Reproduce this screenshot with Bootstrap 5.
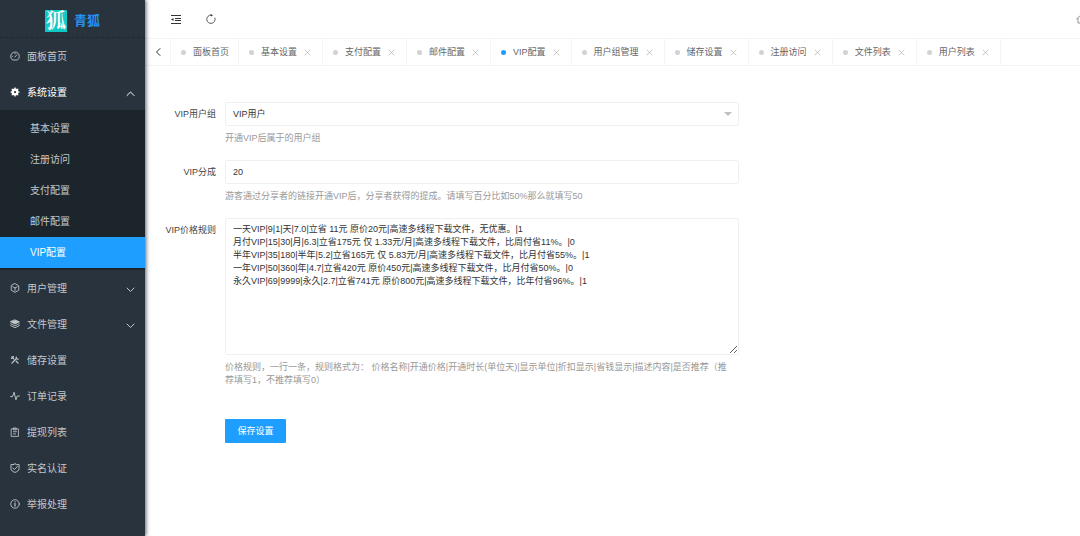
<!DOCTYPE html>
<html lang="zh-CN">
<head>
<meta charset="utf-8">
<meta name="viewport" content="width=device-width, initial-scale=1">
<title>青狐 - VIP配置</title>
<link href="https://cdn.jsdelivr.net/npm/bootstrap@5.3.0/dist/css/bootstrap.min.css" rel="stylesheet">
<style>
  :root { --accent: #1e9fff; --line: #f4f4f4; }
  body { font: 9px/13px "Liberation Sans", "Noto Sans CJK SC", sans-serif; color: #444; background: #fff; }
  a { color: inherit; text-decoration: none; }
  svg { fill: none; stroke: currentColor; stroke-linecap: round; stroke-linejoin: round; flex: none; }

  /* sidebar */
  .side { width: 145px; background: #28333e; color: #c4c8cb; font-size: 10px; box-shadow: 1px 0 4px rgba(40,51,62,.8); z-index: 2; }
  .brand { height: 38px; padding-top: 4px; gap: 7px; border-bottom: 1px dashed #1f2830; }
  .brand-mark { width: 22px; height: 22px; background: #10c8c6; color: #fff; font: 700 20px/20px "Noto Serif CJK SC", "Noto Sans CJK SC", serif; text-align: center; }
  .brand-name { color: #2492ee; font-size: 13px; font-weight: 700; line-height: 22px; }
  .side-link { height: 36px; padding: 0 10px; gap: 7px; }
  .side-link.open { color: #fff; }
  .chevron { margin-top: 3px; }
  .sub-menu { background: #1d252c; padding: 3px 0 2px; }
  .sub-link { height: 31px; padding-left: 30px; }
  .sub-link.active { background: var(--accent); color: #fff; }

  /* top bar and tabs */
  .topbar { height: 38px; padding-left: 26px; gap: 25px; color: #333; overflow: hidden; }
  .tool { border: 0; background: none; padding: 0; color: inherit; line-height: 0; }
  .tool-end { margin-right: -6px; color: #888; }
  .tabs { height: 28px; border-top: 1px solid var(--line); border-bottom: 1px solid var(--line); overflow: hidden; }
  .tab-prev { width: 26px; border: 0; border-right: 1px solid var(--line); background: none; padding: 0; color: #333; }
  .tab-item { border-right: 1px solid var(--line); padding: 0 11px 0 10px; gap: 7px; color: #666; white-space: nowrap; }
  .tab-item:first-of-type { padding-right: 9px; }
  .dot { width: 5px; height: 5px; border-radius: 50%; background: #d2d2d2; }
  .tab-item.active .dot { background: var(--accent); }
  .tab-close { border: 0; background: none; padding: 0; color: #bbb; line-height: 0; }

  /* form */
  .settings { padding: 36px 9px 24px; }
  .field-label { width: 62px; line-height: 24px; text-align: right; flex: none; }
  .field-row { gap: 9px; }
  .field-body { max-width: 514px; min-width: 0; }
  .box { display: block; width: 100%; height: 24px; border: 1px solid #f0f0f0; border-radius: 2px; padding: 0 7px; color: #333; background-color: #fff; outline: 0; font: inherit; }
  select.box { appearance: none; background-image: url("data:image/svg+xml,%3Csvg xmlns='http://www.w3.org/2000/svg' width='8' height='4'%3E%3Cpath d='M0 0h8L4 4z' fill='%23c2c2c2'/%3E%3C/svg%3E"); background-repeat: no-repeat; background-position: right 6px center; }
  textarea.box { height: 137px; padding: 4px 7px; resize: vertical; }
  .help { color: #999; padding: 6px 9px 15px 0; }
  .save { width: 61px; height: 24px; border: 0; border-radius: 1px; background: var(--accent); color: #fff; padding: 0; font: inherit; margin: 17px 0 0 71px; }
</style>
</head>
<body>
<div class="d-flex min-vh-100">
  <nav class="side flex-shrink-0 position-relative" aria-label="主菜单">
    <a href="#" class="brand d-flex justify-content-center align-items-center">
      <span class="brand-mark">狐</span><span class="brand-name">青狐</span>
    </a>
    <a href="#" class="side-link d-flex align-items-center">
      <svg width="10" height="10" viewBox="0 0 16 16" stroke-width="1.4"><path d="M3.5 14a7 7 0 1 1 9 0zM8 9.500l3-3.500M3.500 8.500h.5M8 4v.5"/></svg>面板首页</a>
    <a href="#" class="side-link open d-flex align-items-center" aria-expanded="true">
      <svg width="10" height="10" viewBox="0 0 16 16"><circle cx="8" cy="8" r="3.500" stroke-width="4"/><path d="M8 1.500v13M1.500 8h13M3.500 3.500l9 9M12.500 3.500l-9 9" stroke-width="2"/><circle cx="8" cy="8" r="1.800" fill="#28333e" stroke="none"/></svg>系统设置
      <svg class="chevron ms-auto" width="9" height="9" viewBox="0 0 9 9"><path d="M1 6.500l3.500-3.500L8 6.500"/></svg></a>
    <div class="sub-menu">
      <a href="#" class="sub-link d-flex align-items-center">基本设置</a>
      <a href="#" class="sub-link d-flex align-items-center">注册访问</a>
      <a href="#" class="sub-link d-flex align-items-center">支付配置</a>
      <a href="#" class="sub-link d-flex align-items-center">邮件配置</a>
      <a href="#" class="sub-link active d-flex align-items-center" aria-current="page">VIP配置</a>
    </div>
    <a href="#" class="side-link d-flex align-items-center">
      <svg width="10" height="10" viewBox="0 0 16 16" stroke-width="1.400"><path d="M8 1l6 3.500v7L8 15l-6-3.500v-7zM4.500 6L8 8l3.500-2M8 8v4"/></svg>用户管理
      <svg class="chevron ms-auto" width="9" height="9" viewBox="0 0 9 9"><path d="M1 3l3.500 3.500L8 3"/></svg></a>
    <a href="#" class="side-link d-flex align-items-center">
      <svg width="10" height="10" viewBox="0 0 16 16" stroke-width="1.400"><path d="M8 1.500l7 3-7 3.500-7-3.500z" fill="currentColor"/><path d="M1 7.500L8 11l7-3.500M1 10.500L8 14l7-3.500"/></svg>文件管理
      <svg class="chevron ms-auto" width="9" height="9" viewBox="0 0 9 9"><path d="M1 3l3.500 3.500L8 3"/></svg></a>
    <a href="#" class="side-link d-flex align-items-center">
      <svg width="10" height="10" viewBox="0 0 16 16" stroke-width="2"><path d="M3 13l6.500-6.500M10 3.500a2.500 2.500 0 0 0 3 3M3 3l3 3M10 10l3 3M2.500 5.500l3-3"/></svg>储存设置</a>
    <a href="#" class="side-link d-flex align-items-center">
      <svg width="10" height="10" viewBox="0 0 16 16" stroke-width="1.500"><path d="M1 9h3l2.500-7 3 12L11.500 8H15"/></svg>订单记录</a>
    <a href="#" class="side-link d-flex align-items-center">
      <svg width="10" height="10" viewBox="0 0 16 16" stroke-width="1.300"><path d="M2.500 3h11v12h-11zM6 1.500h4v3H6zM5.500 7.500h5M5.500 11h3.500"/></svg>提现列表</a>
    <a href="#" class="side-link d-flex align-items-center">
      <svg width="10" height="10" viewBox="0 0 16 16" stroke-width="1.500"><path d="M8 1l2 1.500h4.500V9c0 3-3 5-6.500 6-3.500-1-6.500-3-6.500-6V2.500H6zM4.500 8L7 10.500 12 5.500"/></svg>实名认证</a>
    <a href="#" class="side-link d-flex align-items-center">
      <svg width="10" height="10" viewBox="0 0 16 16" stroke-width="1.400"><circle cx="8" cy="8" r="6.800"/><path d="M8 4.500v.3M8 7v4.500" stroke-width="1.800"/></svg>举报处理</a>
  </nav>

  <div class="flex-grow-1 overflow-hidden">
    <header class="topbar d-flex align-items-center">
      <button class="tool" type="button" aria-label="收起菜单"><svg width="10" height="10" viewBox="0 0 10 10"><path d="M0 1.500h10M4 4.500h6M4 6.500h6M0 9.500h10" stroke-linecap="butt"/><path d="M0 5.500l2.500-1.500v3z" fill="currentColor" stroke="none"/></svg></button>
      <button class="tool" type="button" aria-label="刷新"><svg width="10" height="10" viewBox="0 0 10 10"><path d="M9 4a4.200 4.200 0 1 1-4-3" stroke-width=".8"/><path d="M4.500 0L7 1.200 5 2.600z" fill="currentColor" stroke="none"/></svg></button>
      <button class="tool tool-end ms-auto" type="button" aria-label="主页"><svg width="10" height="10" viewBox="0 0 10 10"><path d="M.5 5L5 1l4.500 4M2 4.500V9h6V4.500" stroke-width=".9"/></svg></button>
    </header>
    <nav class="tabs d-flex" aria-label="标签页">
      <button class="tab-prev flex-shrink-0" type="button" aria-label="向左"><svg width="6" height="8" viewBox="0 0 6 8"><path d="M5 .5L1.500 4 5 7.500"/></svg></button>
      <div class="tab-item d-flex align-items-center"><span class="dot"></span><a href="#">面板首页</a></div>
      <div class="tab-item d-flex align-items-center"><span class="dot"></span><a href="#">基本设置</a><button class="tab-close" type="button" aria-label="关闭"><svg width="7" height="7" viewBox="0 0 7 7"><path d="M1 1l5 5M6 1L1 6" stroke-width=".8"/></svg></button></div>
      <div class="tab-item d-flex align-items-center"><span class="dot"></span><a href="#">支付配置</a><button class="tab-close" type="button" aria-label="关闭"><svg width="7" height="7" viewBox="0 0 7 7"><path d="M1 1l5 5M6 1L1 6" stroke-width=".8"/></svg></button></div>
      <div class="tab-item d-flex align-items-center"><span class="dot"></span><a href="#">邮件配置</a><button class="tab-close" type="button" aria-label="关闭"><svg width="7" height="7" viewBox="0 0 7 7"><path d="M1 1l5 5M6 1L1 6" stroke-width=".8"/></svg></button></div>
      <div class="tab-item active d-flex align-items-center"><span class="dot"></span><a href="#" aria-current="page">VIP配置</a><button class="tab-close" type="button" aria-label="关闭"><svg width="7" height="7" viewBox="0 0 7 7"><path d="M1 1l5 5M6 1L1 6" stroke-width=".8"/></svg></button></div>
      <div class="tab-item d-flex align-items-center"><span class="dot"></span><a href="#">用户组管理</a><button class="tab-close" type="button" aria-label="关闭"><svg width="7" height="7" viewBox="0 0 7 7"><path d="M1 1l5 5M6 1L1 6" stroke-width=".8"/></svg></button></div>
      <div class="tab-item d-flex align-items-center"><span class="dot"></span><a href="#">储存设置</a><button class="tab-close" type="button" aria-label="关闭"><svg width="7" height="7" viewBox="0 0 7 7"><path d="M1 1l5 5M6 1L1 6" stroke-width=".8"/></svg></button></div>
      <div class="tab-item d-flex align-items-center"><span class="dot"></span><a href="#">注册访问</a><button class="tab-close" type="button" aria-label="关闭"><svg width="7" height="7" viewBox="0 0 7 7"><path d="M1 1l5 5M6 1L1 6" stroke-width=".8"/></svg></button></div>
      <div class="tab-item d-flex align-items-center"><span class="dot"></span><a href="#">文件列表</a><button class="tab-close" type="button" aria-label="关闭"><svg width="7" height="7" viewBox="0 0 7 7"><path d="M1 1l5 5M6 1L1 6" stroke-width=".8"/></svg></button></div>
      <div class="tab-item d-flex align-items-center"><span class="dot"></span><a href="#">用户列表</a><button class="tab-close" type="button" aria-label="关闭"><svg width="7" height="7" viewBox="0 0 7 7"><path d="M1 1l5 5M6 1L1 6" stroke-width=".8"/></svg></button></div>
    </nav>
    <main>
      <form class="settings">
        <div class="field-row d-flex">
          <label class="field-label" for="group">VIP用户组</label>
          <div class="field-body flex-grow-1">
            <select class="box" id="group"><option>VIP用户</option></select>
            <div class="help">开通VIP后属于的用户组</div>
          </div>
        </div>
        <div class="field-row d-flex">
          <label class="field-label" for="share">VIP分成</label>
          <div class="field-body flex-grow-1">
            <input class="box" id="share" type="text" value="20">
            <div class="help">游客通过分享者的链接开通VIP后，分享者获得的提成。请填写百分比如50%那么就填写50</div>
          </div>
        </div>
        <div class="field-row d-flex">
          <label class="field-label" for="rules">VIP价格规则</label>
          <div class="field-body flex-grow-1">
            <textarea class="box" id="rules">一天VIP|9|1|天|7.0|立省 11元 原价20元|高速多线程下载文件，无优惠。|1
月付VIP|15|30|月|6.3|立省175元 仅 1.33元/月|高速多线程下载文件，比周付省11%。|0
半年VIP|35|180|半年|5.2|立省165元 仅 5.83元/月|高速多线程下载文件，比月付省55%。|1
一年VIP|50|360|年|4.7|立省420元 原价450元|高速多线程下载文件，比月付省50%。|0
永久VIP|69|9999|永久|2.7|立省741元 原价800元|高速多线程下载文件，比年付省96%。|1</textarea>
            <div class="help">价格规则，一行一条，规则格式为： 价格名称|开通价格|开通时长(单位天)|显示单位|折扣显示|省钱显示|描述内容|是否推荐（推荐填写1，不推荐填写0）</div>
          </div>
        </div>
        <button class="save" type="submit">保存设置</button>
      </form>
    </main>
  </div>
</div>
<script src="https://cdn.jsdelivr.net/npm/bootstrap@5.3.0/dist/js/bootstrap.bundle.min.js"></script>
</body>
</html>
